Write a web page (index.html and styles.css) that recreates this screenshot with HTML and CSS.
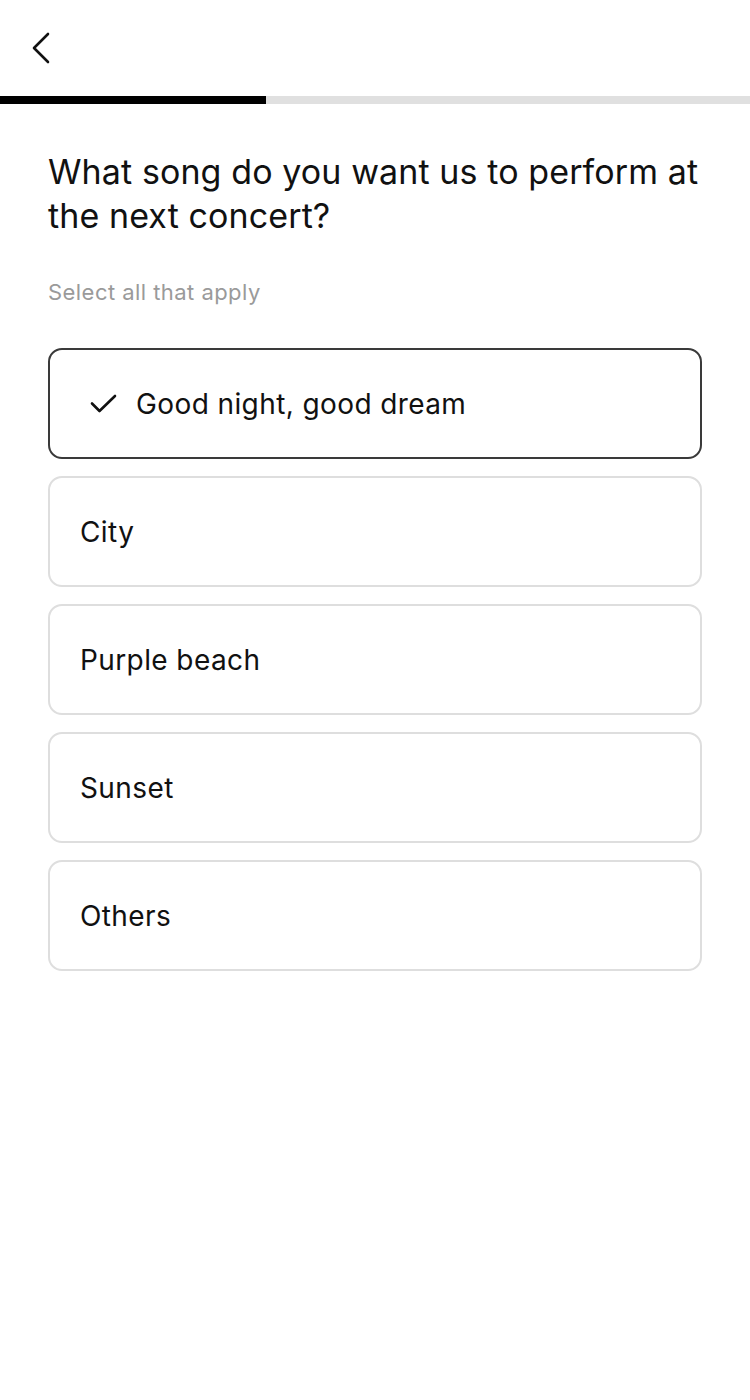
FILE: index.html
```html
<!DOCTYPE html>
<html>
<head>
<meta charset="utf-8">
<link rel="stylesheet" href="styles.css">
</head>
<body>
<header class="topbar">
  <button class="back" aria-label="Back">
    <svg width="24" height="36" viewBox="0 0 24 36"><path d="M18 4 L4 18 L18 32" fill="none" stroke="#111" stroke-width="2.6" stroke-linecap="round" stroke-linejoin="round"/></svg>
  </button>
</header>
<div class="progress"><div class="progress-fill" style="width:266px"></div></div>
<main class="content">
  <h1 class="title">What song do you want us to perform at the next concert?</h1>
  <p class="hint">Select all that apply</p>
  <ul class="options">
    <li class="option selected">
      <svg class="check" width="28" height="20" viewBox="0 0 28 20"><path d="M2 9.5 L9.5 17 L25 2" fill="none" stroke="#111" stroke-width="2.6" stroke-linecap="round" stroke-linejoin="round"/></svg>
      <span>Good night, good dream</span>
    </li>
    <li class="option"><span>City</span></li>
    <li class="option"><span>Purple beach</span></li>
    <li class="option"><span>Sunset</span></li>
    <li class="option"><span>Others</span></li>
  </ul>
</main>
</body>
</html>
```

FILE: styles.css
```css
* { box-sizing: border-box; }
html, body { margin: 0; padding: 0; background: #fff; }
body { font-family: Inter, "Noto Sans", sans-serif; color: #111; width: 750px; }
.topbar { height: 96px; display: flex; align-items: flex-start; padding: 30px 0 0 30px; }
.back { background: none; border: 0; padding: 0; margin: 0; width: 24px; height: 36px; display: block; cursor: pointer; }
.back svg { display: block; }
.progress { height: 8px; background: #e0e0e0; }
.progress-fill { height: 100%; background: #000; }
.content { padding: 46px 48px 0 48px; }
.title { margin: 0; font-size: 34px; line-height: 44px; font-weight: 400; letter-spacing: 0.1px; color: #111; }
.hint { margin: 40px 0 0 0; font-size: 22px; line-height: 28px; color: #9a9a9a; letter-spacing: 0.45px; }
.options { list-style: none; margin: 42px 0 0 0; padding: 0; display: flex; flex-direction: column; gap: 17px; }
.option { height: 111px; border: 2px solid #dedede; border-radius: 14px; display: flex; align-items: center; padding-left: 30px; font-size: 28px; color: #111; letter-spacing: 0.4px; }
.option.selected { border-color: #3a3a3a; padding-left: 40px; gap: 18px; }
.check { display: block; }
```
